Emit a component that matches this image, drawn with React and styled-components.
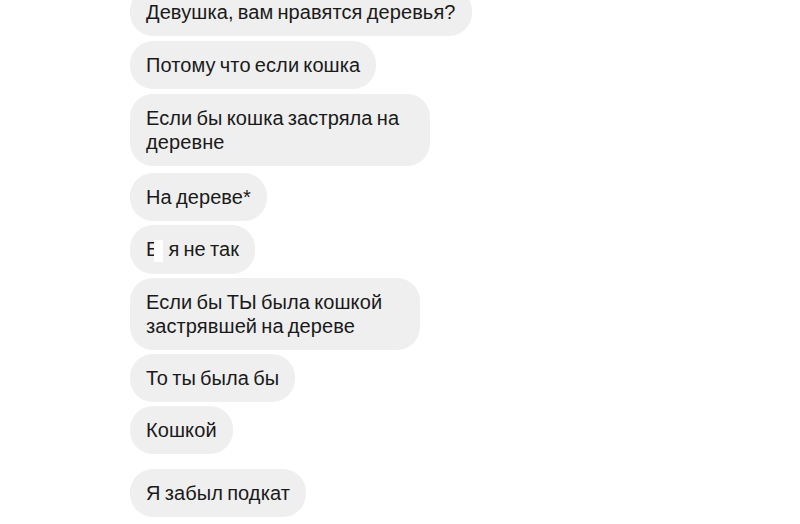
import React from "react";
import styled, { createGlobalStyle } from "styled-components";

const Global = createGlobalStyle`
  html, body {
    margin: 0;
    padding: 0;
    background: #ffffff;
    overflow: hidden;
  }
  body {
    width: 800px;
    height: 524px;
    font-family: "Liberation Sans", Arial, sans-serif;
  }
`;

const Screen = styled.div`
  width: 800px;
  height: 524px;
  overflow: hidden;
  background: #fff;
`;

const Thread = styled.div`
  display: flex;
  flex-direction: column;
  align-items: flex-start;
  gap: 5px;
  margin-top: -12px;
  padding-left: 130px;
`;

const Group = styled.div`
  display: flex;
  flex-direction: column;
  align-items: flex-start;
  gap: 4px;
  margin-top: ${(p) => p.$gap || 0}px;
`;

const Bubble = styled.div`
  box-sizing: border-box;
  max-width: ${(p) => p.$max || 380}px;
  padding: 12px 16px;
  background: #efefef;
  border-radius: 23px;
  color: #1a1a1a;
  font-size: 20px;
  line-height: 24px;
  letter-spacing: 0.1px;
  word-spacing: -1.5px;
`;

const Blot = styled.span`
  display: inline-block;
  width: 9px;
  height: 22px;
  margin-left: -5px;
  margin-right: 1px;
  vertical-align: middle;
  background: #fff;
`;

export default function App() {
  return (
    <Screen>
      <Global />
      <Thread>
        <Bubble>Девушка, вам нравятся деревья?</Bubble>
        <Bubble>Потому что если кошка</Bubble>
        <Bubble $max={300}>Если бы кошка застряла на деревне</Bubble>
        <Group $gap={2}>
          <Bubble>На дереве*</Bubble>
          <Bubble>
            Б<Blot /> я не так
          </Bubble>
          <Bubble $max={290}>Если бы ТЫ была кошкой застрявшей на дереве</Bubble>
          <Bubble>То ты была бы</Bubble>
          <Bubble>Кошкой</Bubble>
        </Group>
        <Group $gap={10}>
          <Bubble>Я забыл подкат</Bubble>
        </Group>
      </Thread>
    </Screen>
  );
}
